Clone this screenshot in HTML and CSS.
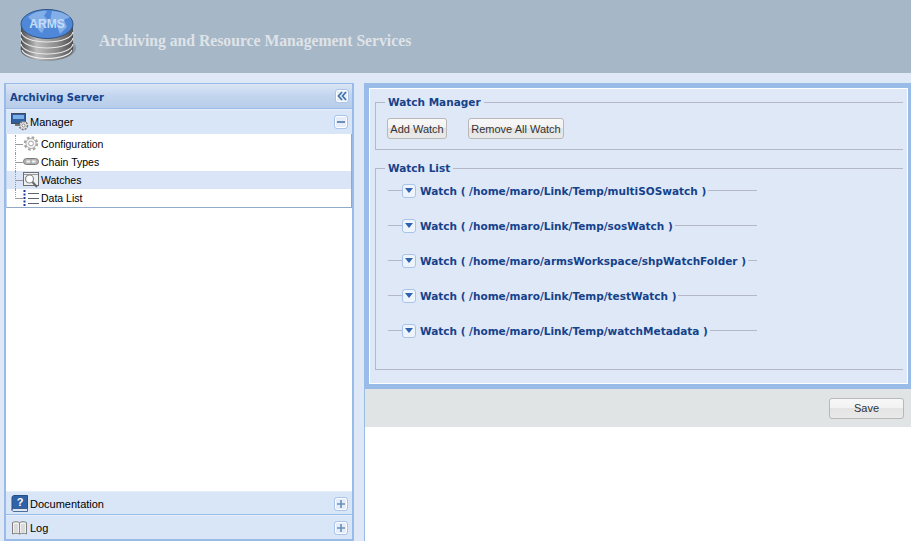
FILE: index.html
```html
<!DOCTYPE html>
<html lang="en">
<head>
<meta charset="utf-8">
<title>ARMS</title>
<link rel="stylesheet" href="styles.css">
</head>
<body>
<header class="banner">
  <svg class="logo" width="58" height="56" viewBox="0 0 58 56">
    <defs>
      <linearGradient id="disc" x1="0" x2="1" y1="0" y2="0">
        <stop offset="0" stop-color="#4e4e4e"/><stop offset=".3" stop-color="#bdbdbd"/><stop offset=".7" stop-color="#8a8a8a"/><stop offset="1" stop-color="#4e4e4e"/>
      </linearGradient>
    </defs>
    <ellipse cx="29" cy="40" rx="28" ry="13" fill="#8696a6"/>
    <path d="M2 17v25c0 6 12 10.500 26 10.500s26-4.500 26-10.500V17z" fill="url(#disc)"/>
    <g fill="none" stroke="#e8e8e8" stroke-width="1.200">
      <path d="M2 24c1 6 12 10 26 10s25-4 26-10"/>
      <path d="M2 30c1 6 12 10 26 10s25-4 26-10"/>
      <path d="M2 36c1 6 12 10 26 10s25-4 26-10"/>
      <path d="M3 42c2 5 12 8.500 25 8.500s23-3.500 25-8.500"/>
    </g>
    <ellipse cx="28" cy="16" rx="26" ry="14.500" fill="#4f88d8" stroke="#2f5488"/>
    <path d="M9 9c6-5 13-7 19-6l-3 5 4 4-6 13c-4-2-5-8-8-10zM33 3c7 0 13 2 18 6-2 2-4 1-6 3l3 7-7 7c-2-4-2-8-4-10l-6-3z" fill="#83afe8"/>
    <text x="28" y="20" class="logo-text" text-anchor="middle">ARMS</text>
  </svg>
  <h1 class="title">Archiving and Resource Management Services</h1>
</header>
<main class="layout">
  <aside class="side">
    <div class="side-head">
      <span class="side-title">Archiving Server</span>
      <span class="tool"><svg width="10" height="10" viewBox="0 0 10 10"><path d="M5 1 1.500 5 5 9M9 1 5.500 5 9 9" fill="none" stroke="#3f6fa8" stroke-width="1.600"/></svg></span>
    </div>
    <div class="acc-head acc-open">
      <svg class="acc-icon" width="18" height="18" viewBox="0 0 18 18"><rect x=".5" y=".5" width="14" height="10" fill="#2f5f9f" stroke="#454a5c"/><rect x="2" y="2" width="11" height="4" fill="#79aee8"/><rect x="4" y="11" width="5" height="2" fill="#777"/><circle cx="12.500" cy="12.500" r="4" fill="#e4e4e4" stroke="#777" stroke-width="1.500" stroke-dasharray="2 1"/><circle cx="12.500" cy="12.500" r="1.500" fill="#fff" stroke="#666" stroke-width=".7"/></svg>
      <span class="acc-label">Manager</span>
      <span class="tool"><svg width="10" height="10" viewBox="0 0 10 10"><path d="M1 5h8" stroke="#6a8fb8" stroke-width="2"/></svg></span>
    </div>
    <ul class="tree">
      <li class="node">
        <span class="dots"></span>
        <svg class="node-icon" width="16" height="16" viewBox="0 0 16 16"><circle cx="8" cy="7.500" r="6" fill="none" stroke="#a8a8a8" stroke-width="2.600" stroke-dasharray="2.600 2.100"/><circle cx="8" cy="7.500" r="5" fill="#f6f6f6" stroke="#a0a0a0" stroke-width=".8"/><circle cx="8" cy="7.500" r="2.400" fill="#fff" stroke="#999" stroke-width=".9"/></svg>
        <span>Configuration</span>
      </li>
      <li class="node">
        <span class="dots"></span>
        <svg class="node-icon" width="16" height="16" viewBox="0 0 16 16"><rect x=".5" y="4.500" width="15" height="6" rx="3" fill="#b4b4b4" stroke="#7c7c7c"/><path d="M3.500 7.500h9" stroke="#f2f2f2" stroke-width="2"/><path d="M8 5.500v4" stroke="#8a8a8a"/></svg>
        <span>Chain Types</span>
      </li>
      <li class="node node-sel">
        <span class="dots"></span>
        <svg class="node-icon" width="16" height="16" viewBox="0 0 16 16"><rect x=".5" y=".5" width="15" height="13" fill="#edf1f6" stroke="#6e6e6e"/><path d="M1 2.500h14" stroke="#9a9a9a"/><circle cx="6.500" cy="7" r="4" fill="#fff" stroke="#8a8a8a" stroke-width="1.200"/><path d="M9.500 10 14 15" stroke="#666" stroke-width="2"/></svg>
        <span>Watches</span>
      </li>
      <li class="node">
        <span class="dots dots-end"></span>
        <svg class="node-icon" width="16" height="16" viewBox="0 0 16 16"><path d="M5 3.500h11M5 8.500h11M5 13.500h11" stroke="#5c6470" stroke-width="1.200"/><path d="M1.500 0v2M1.500 3.500v2M1.500 7v2M1.500 10.500v2M1.500 14v2" stroke="#1a3f9a" stroke-width="2"/></svg>
        <span>Data List</span>
      </li>
    </ul>
    <div class="side-fill"></div>
    <div class="acc-head acc-closed">
      <svg class="acc-icon" width="18" height="18" viewBox="0 0 18 18"><path d="M3 .5h13.500v13H3c-1 0-2 .5-2 1.500V2.500c0-1 1-2 2-2z" fill="#2f62a6" stroke="#264f87"/><path d="M1 15c0-1 1-1.500 2-1.500h13.500v3H3c-1 0-2-.5-2-1.500z" fill="#dfe7f3" stroke="#264f87" stroke-width=".8"/><text x="9" y="11" class="icon-q" text-anchor="middle">?</text></svg>
      <span class="acc-label">Documentation</span>
      <span class="tool"><svg width="10" height="10" viewBox="0 0 10 10"><path d="M1 5h8M5 1v8" stroke="#6a8fb8" stroke-width="1.600"/></svg></span>
    </div>
    <div class="acc-head acc-closed acc-end">
      <svg class="acc-icon" width="18" height="18" viewBox="0 0 18 18"><path d="M1.500 3.500c2-1 5-1 7 0 2-1 5-1 7 0v11.500c-2-1-5-1-7 0-2-1-5-1-7 0z" fill="#f1f1f1" stroke="#808080"/><path d="M8.500 4v11" stroke="#888"/><path d="M3.500 6h3M3.500 8h3M3.500 10h3M3.500 12h3M10.500 6h3M10.500 8h3M10.500 10h3M10.500 12h3" stroke="#999" stroke-dasharray="1 1"/></svg>
      <span class="acc-label">Log</span>
      <span class="tool"><svg width="10" height="10" viewBox="0 0 10 10"><path d="M1 5h8M5 1v8" stroke="#6a8fb8" stroke-width="1.600"/></svg></span>
    </div>
  </aside>
  <section class="content">
    <div class="form">
      <fieldset class="group group-manager">
        <legend class="legend">Watch Manager</legend>
        <div class="actions">
          <button class="btn btn-add" type="button">Add Watch</button>
          <button class="btn btn-remove" type="button">Remove All Watch</button>
        </div>
      </fieldset>
      <fieldset class="group group-list">
        <legend class="legend">Watch List</legend>
        <div class="watches">
          <div class="watch"><span class="rule-s"></span><span class="drop"><svg width="8" height="5" viewBox="0 0 8 5"><path d="M0 0h8L4 5z" fill="#2f62b0"/></svg></span><span class="watch-text">Watch ( /home/maro/Link/Temp/multiSOSwatch )</span><span class="rule-e"></span></div>
          <div class="watch"><span class="rule-s"></span><span class="drop"><svg width="8" height="5" viewBox="0 0 8 5"><path d="M0 0h8L4 5z" fill="#2f62b0"/></svg></span><span class="watch-text">Watch ( /home/maro/Link/Temp/sosWatch )</span><span class="rule-e"></span></div>
          <div class="watch"><span class="rule-s"></span><span class="drop"><svg width="8" height="5" viewBox="0 0 8 5"><path d="M0 0h8L4 5z" fill="#2f62b0"/></svg></span><span class="watch-text">Watch ( /home/maro/armsWorkspace/shpWatchFolder )</span><span class="rule-e"></span></div>
          <div class="watch"><span class="rule-s"></span><span class="drop"><svg width="8" height="5" viewBox="0 0 8 5"><path d="M0 0h8L4 5z" fill="#2f62b0"/></svg></span><span class="watch-text">Watch ( /home/maro/Link/Temp/testWatch )</span><span class="rule-e"></span></div>
          <div class="watch"><span class="rule-s"></span><span class="drop"><svg width="8" height="5" viewBox="0 0 8 5"><path d="M0 0h8L4 5z" fill="#2f62b0"/></svg></span><span class="watch-text">Watch ( /home/maro/Link/Temp/watchMetadata )</span><span class="rule-e"></span></div>
        </div>
      </fieldset>
    </div>
    <div class="toolbar"><button class="btn btn-save" type="button">Save</button></div>
  </section>
</main>
</body>
</html>
```

FILE: styles.css
```css
* { box-sizing: border-box; }
html, body { height: 100%; }
body { margin: 0; background: #dfe8f6; font-family: "Liberation Sans", Arial, sans-serif; font-size: 11px; color: #000; overflow: hidden; display: flex; flex-direction: column; }
.banner { height: 73px; flex: none; background: #a6b7c7; display: flex; align-items: flex-start; padding: 8px 0 0 19px; }
.logo { flex: none; }
.title { margin: 24px 0 0 22px; font: bold 15.700px "Liberation Serif", "Times New Roman", serif; color: #dfe3e8; white-space: nowrap; }
.logo-text { font: bold 12px "Liberation Sans", sans-serif; fill: #c5dcf8; }
.icon-q { font: bold 11px "Liberation Sans", sans-serif; fill: #fff; }
.layout { flex: 1; display: flex; min-height: 0; padding-top: 10px; }
.side { width: 350px; margin-left: 4px; flex: none; display: flex; flex-direction: column; border: 1px solid #99bbe8; border-width: 1px 2px 2px 2px; background: #fff; }
.side-head { height: 25px; flex: none; display: flex; align-items: center; justify-content: space-between; padding: 0 3px 0 4px; background: linear-gradient(#dbe6f5, #c4d6ef 45%, #b8cdea); border-bottom: 1px solid #99bbe8; }
.side-title { padding-top: 2px; font: bold 10px "DejaVu Sans", sans-serif; color: #15428b; }
.tool { width: 14px; height: 14px; flex: none; display: flex; align-items: center; justify-content: center; background: #e4edf9; border: 1px solid #a9c4e8; box-shadow: inset 0 0 0 1px #fff; border-radius: 3px; }
.acc-head { height: 24px; flex: none; display: flex; align-items: center; padding: 0 4px 0 5px; background: #d9e6f8; border-bottom: 1px solid #99bbe8; border-top: 1px solid #e6eefa; }
.acc-icon { flex: none; margin-right: 1px; }
.acc-label { flex: 1; font-size: 11px; }
.acc-open { border-bottom: none; height: 25px; }
.acc-closed { padding-top: 1px; }
.acc-end { border-bottom: none; }
.tree { list-style: none; margin: 0; padding: 1px 0 0; flex: none; border-bottom: 1px solid #8fa9c9; border-right: 1px solid #8fa9c9; border-left: 1px solid #c5d7ee; background: #fff; }
.node { height: 18px; display: flex; align-items: center; padding-left: 8px; font-size: 10.500px; }
.node-icon { flex: none; margin-right: 2px; }
.node-sel { background: #dae6f8; }
.dots { width: 8px; height: 18px; flex: none; border-left: 1px dotted #999; background: radial-gradient(circle, #999 0, #999 .5px, transparent .6px) 0 8.500px / 2px 1px repeat-x; }
.dots-end { height: 10px; align-self: flex-start; }
.side-fill { flex: 1; background: #fff; }
.content { flex: 1; min-width: 0; margin-left: 10px; display: flex; flex-direction: column; border-left: 1px solid #99bbe8; background: #fff; }
.form { height: 306px; flex: none; background: #dfe8f6; border: 5px solid #99bbe8; border-left-width: 4px; border-right-width: 3px; padding: 0 5px 0 6px; box-shadow: inset 0 0 0 1px #fff; }
.group { margin: 0; padding: 0; border: 1px solid #b5b8c8; border-width: 1px 0 1px 1px; min-width: 0; }
.group-manager { margin-top: 8px; height: 54px; }
.group-list { margin-top: 12px; height: 208px; }
.legend { margin-left: 9px; padding: 0 3px; font: bold 10.500px "DejaVu Sans", sans-serif; color: #15428b; }
.actions { display: flex; gap: 21px; padding: 10px 0 0 11px; }
.btn { height: 21px; padding: 0; font: 11px "Liberation Sans", sans-serif; color: #333; background: linear-gradient(#f7f7f7 0, #f2f2f2 50%, #e4e4e4 50%, #e9e9e9); border: 1px solid #b8b8b8; border-radius: 3px; }
.btn-add { width: 60px; }
.btn-remove { width: 96px; }
.watches { display: flex; flex-direction: column; gap: 14px; padding: 6px 0 0 12px; }
.watch { height: 21px; width: 369px; display: flex; align-items: center; }
.rule-s { width: 14px; height: 1px; background: #b5b8c8; flex: none; }
.rule-e { flex: 1; height: 1px; background: #b5b8c8; margin-left: 2px; }
.drop { width: 14px; height: 14px; flex: none; display: flex; align-items: center; justify-content: center; background: #eef4fc; border: 1px solid #a9c4e8; border-radius: 3px; margin-right: 4px; }
.watch-text { font: bold 10.500px "DejaVu Sans", sans-serif; color: #15428b; white-space: nowrap; }
.toolbar { height: 38px; flex: none; background: #e1e4e5; display: flex; justify-content: flex-end; align-items: center; padding-right: 7px; }
.btn-save { width: 75px; }
```
